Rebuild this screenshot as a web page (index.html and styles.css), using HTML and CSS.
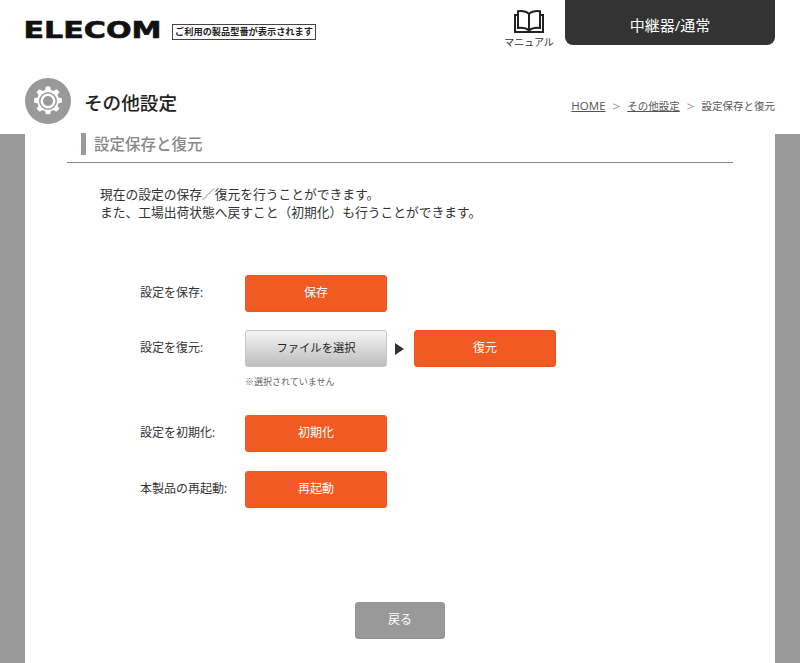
FILE: index.html
```html
<!DOCTYPE html>
<html lang="ja">
<head>
    <meta charset="UTF-8">
    <meta name="viewport" content="width=device-width, initial-scale=1.0">
    <title>その他設定</title>
    <link rel="stylesheet" href="styles.css">
</head>
<body>
    <header class="header">
        <div class="top">
            <svg class="logo" width="136" height="20" viewBox="0 0 136 20" role="img" aria-label="ELECOM">
                <text x="-1.500" y="18.500" textLength="138" lengthAdjust="spacingAndGlyphs" class="logo-text">ELECOM</text>
            </svg>
            <div class="model">ご利用の製品型番が表示されます</div>
            <a class="manual" href="#">
                <svg width="30" height="23" viewBox="0 0 30 23" fill="none" stroke="#222" stroke-width="2">
                    <path d="M15 4C12.500 1.500 8 .8 4 1.200V18C8 17.600 12.500 18.300 15 20.500C17.500 18.300 22 17.600 26 18V1.200C22 .8 17.500 1.500 15 4V20.500"/>
                    <path d="M4 5H1V22H29V5H26"/>
                </svg>
                <span>マニュアル</span>
            </a>
            <div class="mode">中継器/通常</div>
        </div>
        <div class="title-row">
            <div class="page-icon">
                <svg width="30" height="30" viewBox="0 0 30 30">
                    <path fill="#fff" d="M12.800 .5h4.400l.7 3.400 2.500 1 2.900-1.900 3.100 3.100-1.900 2.900 1 2.500 3.400.7v4.400l-3.400.7-1 2.500 1.900 2.900-3.100 3.100-2.900-1.900-2.500 1-.7 3.400h-4.400l-.7-3.400-2.500-1-2.900 1.900-3.100-3.100 1.900-2.900-1-2.500-3.400-.7v-4.400l3.400-.7 1-2.500-1.900-2.900 3.100-3.100 2.900 1.900 2.500-1z"/>
                    <circle cx="15" cy="15" r="9" fill="#999"/>
                    <circle cx="15" cy="15" r="7.500" fill="#fff"/>
                    <circle cx="15" cy="15" r="5" fill="#999"/>
                </svg>
            </div>
            <h1>その他設定</h1>
            <nav class="crumbs">
                <a class="crumb-home" href="#">HOME</a>
                <span class="sep">&gt;</span>
                <a href="#">その他設定</a>
                <span class="sep">&gt;</span>
                <span>設定保存と復元</span>
            </nav>
        </div>
    </header>

    <main class="panel">
        <h2 class="section-title">設定保存と復元</h2>
        <p class="intro">現在の設定の保存／復元を行うことができます。<br>また、工場出荷状態へ戻すこと（初期化）も行うことができます。</p>

        <div class="rows">
            <div class="row">
                <span class="label">設定を保存:</span>
                <button type="button" class="btn">保存</button>
            </div>
            <div class="row row-restore">
                <span class="label">設定を復元:</span>
                <button type="button" class="btn btn-file">ファイルを選択</button>
                <span class="arrow"></span>
                <button type="button" class="btn">復元</button>
            </div>
            <div class="file-note">※選択されていません</div>
            <div class="row row-init">
                <span class="label">設定を初期化:</span>
                <button type="button" class="btn">初期化</button>
            </div>
            <div class="row row-reboot">
                <span class="label">本製品の再起動:</span>
                <button type="button" class="btn">再起動</button>
            </div>
        </div>

        <div class="back-wrap">
            <button type="button" class="btn-back">戻る</button>
        </div>
    </main>
</body>
</html>
```

FILE: styles.css
```css
body {
    margin: 0;
    height: 663px;
    overflow: hidden;
    background-color: #999;
    color: #333;
    font-family: "Open Sans", "Noto Sans CJK JP", sans-serif;
    font-size: 13px;
}
a {
    color: inherit;
}
.header {
    height: 134px;
    padding: 0 25px;
    background: #fff;
}
.top {
    display: flex;
    align-items: flex-start;
    height: 78px;
}
.logo {
    margin-top: 19px;
    margin-right: 11px;
    overflow: visible;
}
.logo-text {
    font-family: "DejaVu Sans", sans-serif;
    font-weight: bold;
    font-size: 23px;
    fill: #111;
    stroke: #111;
    stroke-width: 0.6;
}
.model {
    margin-top: 24px;
    width: 142px;
    height: 14px;
    border: 1px solid #444;
    font-size: 9.200px;
    font-weight: bold;
    line-height: 14px;
    text-align: center;
    white-space: nowrap;
    color: #222;
}
.manual {
    display: flex;
    flex-direction: column;
    align-items: center;
    width: 60px;
    margin-left: auto;
    margin-right: 6px;
    padding-top: 10px;
    font-size: 10px;
    line-height: 14px;
    text-decoration: none;
    white-space: nowrap;
}
.manual span {
    margin-top: 2px;
}
.mode {
    width: 210px;
    height: 45px;
    background: #333;
    border-radius: 0 0 8px 8px;
    color: #fff;
    font-size: 15px;
    line-height: 50px;
    text-align: center;
}
.title-row {
    display: flex;
    align-items: center;
    height: 46px;
}
.page-icon {
    display: flex;
    align-items: center;
    justify-content: center;
    width: 46px;
    height: 46px;
    border-radius: 50%;
    background: #999;
}
h1 {
    margin: 0 0 0 13px;
    font-size: 18.600px;
    font-weight: 500;
    color: #222;
}
.crumbs {
    display: flex;
    align-items: center;
    gap: 7px;
    margin-left: auto;
    margin-top: 9px;
    font-size: 10.500px;
    color: #555;
}
.crumb-home {
    font-size: 11.500px;
}
.crumbs .sep {
    font-size: 13.500px;
    color: #999;
}
.panel {
    height: 529px;
    margin: 0 25px;
    background: #fff;
}
.section-title {
    position: relative;
    height: 28px;
    margin: 0 42px;
    padding-left: 27px;
    border-bottom: 1px solid #888;
    font-size: 15.500px;
    font-weight: 500;
    line-height: 20px;
    color: #888;
}
.section-title::before {
    content: "";
    position: absolute;
    left: 14px;
    top: -1px;
    width: 5px;
    height: 22px;
    background: #999;
}
.intro {
    margin: 22px 0 0 75px;
    font-size: 12.750px;
    line-height: 18px;
}
.rows {
    margin: 54px 0 0 115px;
}
.row {
    display: flex;
    align-items: center;
    height: 37px;
}
.label {
    width: 105px;
    padding-bottom: 3px;
    font-size: 12px;
    white-space: nowrap;
}
.btn {
    width: 142px;
    height: 37px;
    padding: 0 0 3px;
    border: 1px solid #ef5520;
    border-radius: 3px;
    background: #f25a24;
    color: #fff;
    font-family: inherit;
    font-size: 12px;
}
.btn-file {
    border-color: #c4c4c4;
    background: linear-gradient(#f5f5f5, #bdbdbd);
    color: #222;
    font-size: 11.300px;
}
.arrow {
    width: 0;
    height: 0;
    margin: 0 10px 0 8px;
    border-top: 6px solid transparent;
    border-bottom: 6px solid transparent;
    border-left: 9px solid #333;
}
.row-restore {
    margin-top: 18px;
}
.file-note {
    margin: 8px 0 0 105px;
    font-size: 9px;
    line-height: 14px;
    color: #666;
}
.row-init {
    margin-top: 26px;
}
.row-reboot {
    margin-top: 19px;
}
.back-wrap {
    margin-top: 94px;
    text-align: center;
}
.btn-back {
    width: 90px;
    height: 37px;
    padding: 0 0 3px;
    border: 1px solid #949494;
    border-radius: 3px;
    background: #999;
    color: #fff;
    font-family: inherit;
    font-size: 12px;
}
```
